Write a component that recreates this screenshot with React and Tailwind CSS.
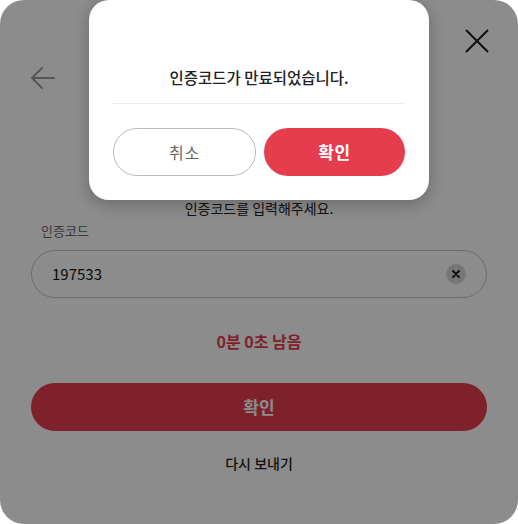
import React from "react";

export default function App() {
  return (
    <div
      className="w-[518px] h-[524px] bg-white relative"
      style={{ fontFamily: '"Noto Sans CJK KR", "Noto Sans", sans-serif' }}
    >
      <div className="relative w-full h-full rounded-[24px] overflow-hidden bg-white">
        {/* underlying page */}
        <div className="flex flex-col px-[31px]">
          <div className="h-[66px]" />
          <div className="h-[24px] flex items-center">
            <svg width="26" height="24" viewBox="0 0 26 24" fill="none" className="-ml-[1px]">
              <path d="M24 12H2M12 2L2 12L12 22" stroke="#9a9a9a" strokeWidth="1.8" strokeLinecap="round" strokeLinejoin="round" />
            </svg>
          </div>
          <div className="h-[108px]" />
          <p className="h-[20px] leading-[20px] text-center text-[14px] text-[#222]">인증코드를 입력해주세요.</p>
          <p className="mt-[4px] h-[18px] leading-[18px] pl-[10px] text-[13px] text-[#666]">인증코드</p>
          <div className="mt-[10px] h-[48px] rounded-full border border-[#c4c4c4] flex items-center pl-[20px] pr-[20px]">
            <span className="flex-1 text-[15px] text-[#111]">197533</span>
            <span className="w-[20px] h-[20px] rounded-full bg-[#d8d8d8] flex items-center justify-center">
              <svg width="10" height="10" viewBox="0 0 10 10">
                <path d="M2 2L8 8M8 2L2 8" stroke="#222" strokeWidth="2.2" strokeLinecap="round" />
              </svg>
            </span>
          </div>
          <p className="mt-[31px] h-[24px] leading-[24px] text-center text-[16px] font-bold text-[#e53c4e]">0분 0초 남음</p>
          <button className="mt-[30px] h-[48px] rounded-full bg-[#e53c4e] text-white text-[17px] font-bold">확인</button>
          <p className="mt-[22px] h-[20px] leading-[20px] text-center text-[14px] font-medium text-[#222]">다시 보내기</p>
        </div>

        {/* overlay */}
        <div className="absolute inset-0 bg-black/45" />

        {/* close icon */}
        <button className="absolute left-[464px] top-[28px] w-[26px] h-[26px] flex items-center justify-center">
          <svg width="26" height="26" viewBox="0 0 26 26">
            <path d="M2 2L24 24M24 2L2 24" stroke="#111" strokeWidth="2" />
          </svg>
        </button>

        {/* modal */}
        <div className="absolute left-[89px] top-0 w-[340px] h-[200px] bg-white rounded-[20px] shadow-[0_4px_16px_rgba(0,0,0,0.25)] flex flex-col px-[24px] pt-[65px]">
          <p className="h-[24px] leading-[24px] text-center text-[15.5px] font-medium text-[#222]">인증코드가 만료되었습니다.</p>
          <div className="mt-[14px] h-px bg-[#ececec]" />
          <div className="mt-[24px] flex gap-[8px]">
            <button className="flex-1 h-[48px] rounded-full border border-[#bbbbbb] text-[16px] tracking-[0.05em] text-[#666]">취소</button>
            <button className="flex-1 h-[48px] rounded-full bg-[#e53c4e] text-[17px] font-bold tracking-[0.03em] text-white">확인</button>
          </div>
        </div>
      </div>
    </div>
  );
}
